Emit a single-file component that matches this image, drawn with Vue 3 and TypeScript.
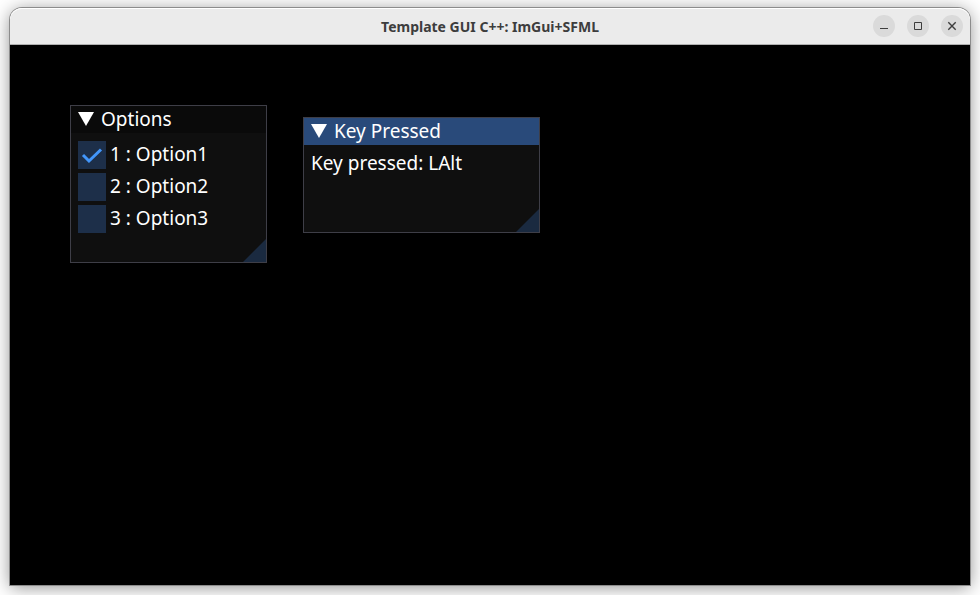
<script setup lang="ts">
import { ref } from 'vue'

interface Option {
  id: number
  label: string
  checked: boolean
}

const options = ref<Option[]>([
  { id: 1, label: '1 : Option1', checked: true },
  { id: 2, label: '2 : Option2', checked: false },
  { id: 3, label: '3 : Option3', checked: false },
])

const optionsOpen = ref(true)
const keysOpen = ref(true)
const lastKey = ref('LAlt')
</script>

<template>
  <div class="desktop">
    <main class="window">
      <header class="titlebar">
        <h1 class="title">Template GUI C++: ImGui+SFML</h1>
        <div class="controls">
          <button class="control" type="button" aria-label="Minimize">
            <svg viewBox="0 0 22 22"><path d="M7 13.500h8" /></svg>
          </button>
          <button class="control" type="button" aria-label="Maximize">
            <svg viewBox="0 0 22 22"><path d="M7.500 7.500h7v7h-7z" /></svg>
          </button>
          <button class="control" type="button" aria-label="Close">
            <svg viewBox="0 0 22 22"><path class="cross" d="M7.300 7.300l7.400 7.400M14.700 7.300l-7.400 7.400" /></svg>
          </button>
        </div>
      </header>

      <div class="canvas">
        <section class="panel options" :class="{ collapsed: !optionsOpen }">
          <button class="panel-title" type="button" :aria-expanded="optionsOpen" @click="optionsOpen = !optionsOpen">
            <svg class="arrow" viewBox="0 0 16 14"><path d="M0 0h16L8 14z" /></svg>
            <span>Options</span>
          </button>
          <div v-if="optionsOpen" class="panel-body list">
            <label v-for="option in options" :key="option.id" class="option">
              <span class="box">
                <input v-model="option.checked" type="checkbox" />
                <svg v-if="option.checked" viewBox="0 0 28 28"><path d="M5 14l6 6L23 8.500" /></svg>
              </span>
              <span>{{ option.label }}</span>
            </label>
          </div>
          <span class="grip"></span>
        </section>

        <section class="panel keys" :class="{ collapsed: !keysOpen }">
          <button class="panel-title active" type="button" :aria-expanded="keysOpen" @click="keysOpen = !keysOpen">
            <svg class="arrow" viewBox="0 0 16 14"><path d="M0 0h16L8 14z" /></svg>
            <span>Key Pressed</span>
          </button>
          <p v-if="keysOpen" class="panel-body message">Key pressed: {{ lastKey }}</p>
          <span class="grip"></span>
        </section>
      </div>
    </main>
  </div>
</template>

<style>
body {
  background: #fff;
}
</style>

<style scoped>
.desktop {
  box-sizing: border-box;
  display: flex;
  min-height: 100vh;
  padding: 8px 10px 10px;
  overflow: hidden;
}

.window {
  display: flex;
  flex: 1;
  flex-direction: column;
  border-radius: 12px 12px 0 0;
  box-shadow: 0 0 0 1px #8c8c8c, 0 2px 18px rgba(0, 0, 0, 0.45);
}

.titlebar {
  display: grid;
  grid-template-columns: 1fr auto 1fr;
  align-items: center;
  box-sizing: border-box;
  height: 37px;
  padding: 0 7px;
  border-bottom: 1px solid #b0b0b0;
  border-radius: 12px 12px 0 0;
  background: #ebebeb;
  box-shadow: inset 0 1px #fff;
}

.title {
  grid-column: 2;
  margin: 0;
  padding-top: 2px;
  color: #3d3d3d;
  font: bold 14px/20px "Noto Sans", sans-serif;
}

.controls {
  display: flex;
  justify-content: flex-end;
  gap: 12px;
}

.control {
  width: 22px;
  height: 22px;
  padding: 0;
  border: 0;
  border-radius: 50%;
  background: #dadada;
}

.control svg {
  display: block;
  fill: none;
  stroke: #3d3d3d;
}

.control .cross {
  stroke-width: 1.4;
}

.canvas {
  position: relative;
  flex: 1;
  background: #000;
}

.panel {
  position: absolute;
  box-sizing: border-box;
  border: 1px solid #3e3e47;
  background: #0f0f0f;
  color: #fff;
  font: 19px/26px "Noto Sans", sans-serif;
}

.options {
  top: 60px;
  left: 60px;
  width: 197px;
  height: 158px;
}

.keys {
  top: 72px;
  left: 293px;
  width: 237px;
  height: 116px;
}

.panel.collapsed {
  height: auto;
}

.collapsed .grip {
  display: none;
}

.panel-title {
  display: flex;
  align-items: center;
  gap: 7px;
  width: 100%;
  height: 27px;
  padding: 0 7px 2px;
  border: 0;
  background: #0a0a0a;
  color: inherit;
  font: inherit;
}

.panel-title.active {
  background: #294a7a;
}

.arrow {
  width: 16px;
  height: 14px;
  fill: #fff;
}

.panel-body {
  margin: 0;
  padding: 8px 7px;
}

.message {
  padding-top: 5px;
}

.list {
  display: flex;
  flex-direction: column;
  gap: 4px;
}

.option {
  display: flex;
  gap: 4px;
}

.box {
  display: grid;
  width: 28px;
  height: 28px;
}

.box > * {
  grid-area: 1 / 1;
}

.box input {
  width: 28px;
  height: 28px;
  margin: 0;
  appearance: none;
  background: #1d2f49;
}

.box svg {
  fill: none;
  stroke: #4296fa;
  stroke-width: 3;
  pointer-events: none;
}

.grip {
  position: absolute;
  right: 0;
  bottom: 0;
  width: 23px;
  height: 23px;
  background: #1a2a40;
  clip-path: polygon(100% 0, 100% 100%, 0 100%);
}
</style>
